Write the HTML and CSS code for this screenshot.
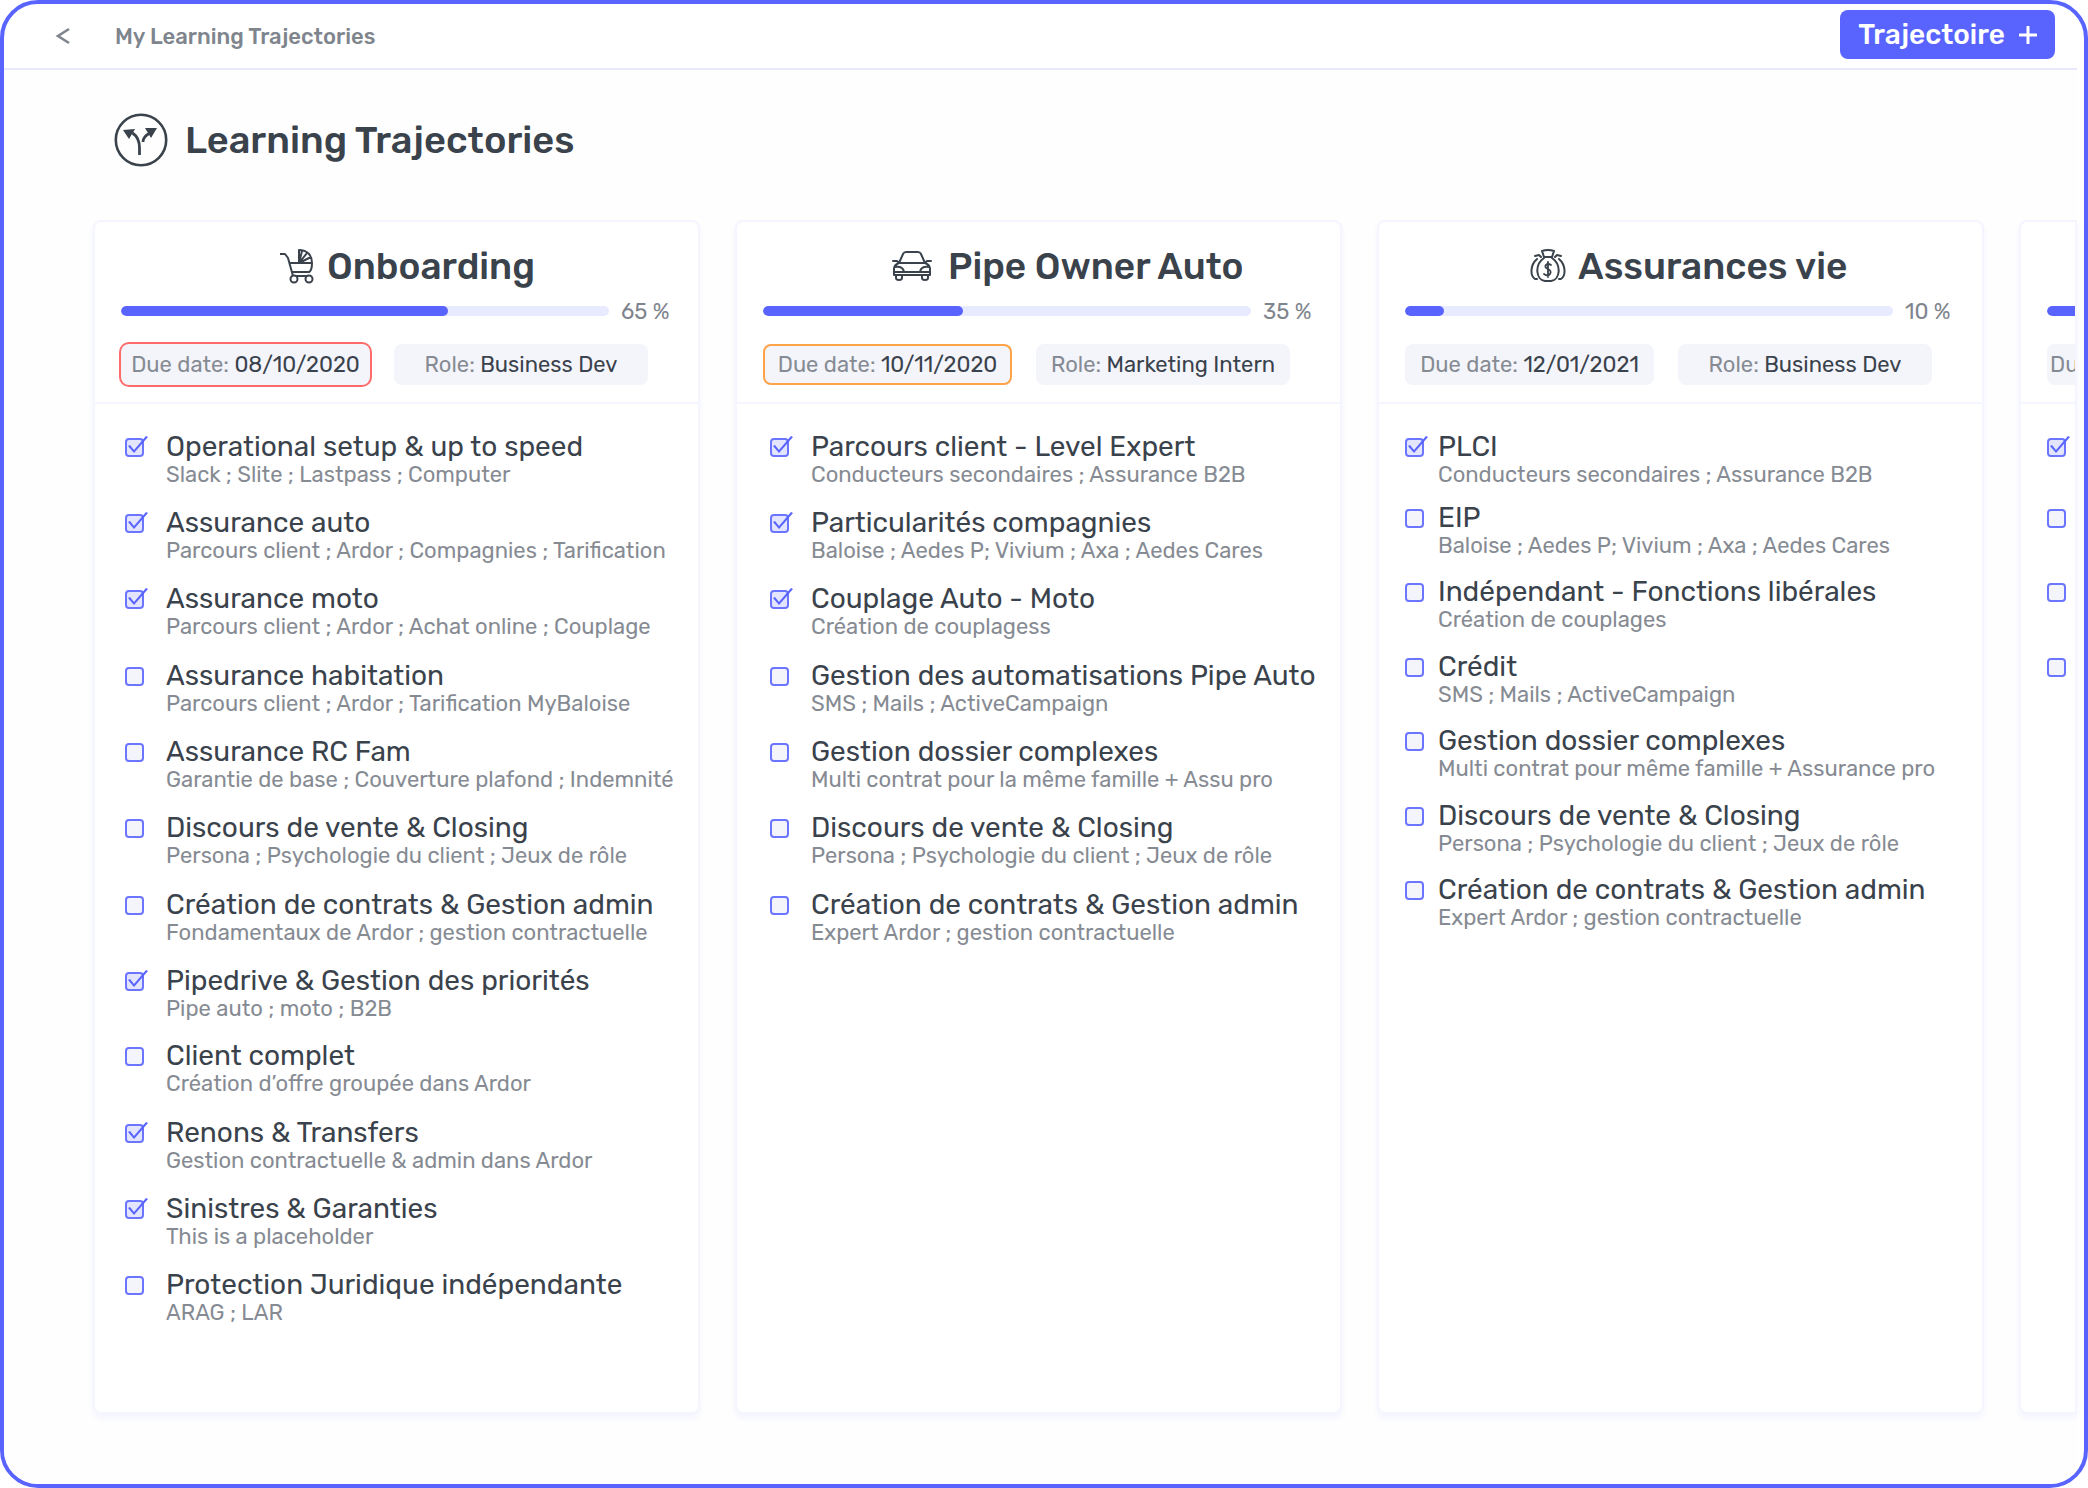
FILE: index.html
```html
<!DOCTYPE html>
<html lang="fr">
<head>
<meta charset="utf-8">
<meta name="viewport" content="width=device-width, initial-scale=1">
<title>Learning Trajectories</title>
<link rel="stylesheet" href="styles.css">
</head>
<body>
<div class="frame">
  <header class="topbar">
    <a class="back" href="#" aria-label="Back"><svg width="16" height="18" viewBox="0 0 16 18"><path d="M14 2 3 9l11 7" fill="none" stroke="currentColor" stroke-width="2.6"/></svg></a>
    <nav class="crumb"><a href="#">My Learning Trajectories</a></nav>
    <button class="add" type="button">Trajectoire <svg width="18" height="18" viewBox="0 0 18 18" aria-hidden="true"><path d="M9 1v16M1 9h16" stroke="currentColor" stroke-width="3" stroke-linecap="round"/></svg></button>
  </header>
  <main class="page">
    <h1 class="page-title">
      <svg width="54" height="54" viewBox="0 0 54 54" aria-hidden="true"><circle cx="27" cy="27" r="25.2" fill="none" stroke="currentColor" stroke-width="2.6"/><path d="M25.500 42V35c0-8-2.500-12-7-15M29 29c0-4 3-7 7-9" fill="none" stroke="currentColor" stroke-width="2.800"/><path d="m9 17 12-1-6 10zM31 15l12 0-6 10z" fill="currentColor"/></svg>
      Learning Trajectories
    </h1>
    <div class="board">
      <section class="card card--onboarding">
        <div class="card-head">
          <h2><svg width="36" height="36" viewBox="0 0 36 36" aria-hidden="true" fill="none" stroke="currentColor" stroke-width="2" stroke-linejoin="round"><path d="M1 6h5l3 4 5 18h16M10 15h23c0 5-1 8-3 9H13M20 15V2c8 0 13 5 13 13M20 15l3-12M20 15l8-10M20 15l12-6"/><circle cx="15" cy="31" r="3.500" fill="#fff"/><circle cx="30" cy="31" r="3.500" fill="#fff"/></svg>Onboarding</h2>
          <div class="progress"><div class="track"><div class="fill" style="width:67%"></div></div><span>65 %</span></div>
          <div class="chips"><p class="chip due late">Due date: <b>08/10/2020</b></p><p class="chip role">Role: <b>Business Dev</b></p></div>
        </div>
        <ul class="steps">
          <li><label><input type="checkbox" checked><span><strong>Operational setup &amp; up to speed</strong><small>Slack ; Slite ; Lastpass ; Computer</small></span></label></li>
          <li><label><input type="checkbox" checked><span><strong>Assurance auto</strong><small>Parcours client ; Ardor ; Compagnies ; Tarification</small></span></label></li>
          <li><label><input type="checkbox" checked><span><strong>Assurance moto</strong><small>Parcours client ; Ardor ; Achat online ; Couplage</small></span></label></li>
          <li><label><input type="checkbox"><span><strong>Assurance habitation</strong><small>Parcours client ; Ardor ; Tarification MyBaloise</small></span></label></li>
          <li><label><input type="checkbox"><span><strong>Assurance RC Fam</strong><small>Garantie de base ; Couverture plafond ; Indemnité</small></span></label></li>
          <li><label><input type="checkbox"><span><strong>Discours de vente &amp; Closing</strong><small>Persona ; Psychologie du client ; Jeux de rôle</small></span></label></li>
          <li><label><input type="checkbox"><span><strong>Création de contrats &amp; Gestion admin</strong><small>Fondamentaux de Ardor ; gestion contractuelle</small></span></label></li>
          <li><label><input type="checkbox" checked><span><strong>Pipedrive &amp; Gestion des priorités</strong><small>Pipe auto ; moto ; B2B</small></span></label></li>
          <li><label><input type="checkbox"><span><strong>Client complet</strong><small>Création d’offre groupée dans Ardor</small></span></label></li>
          <li><label><input type="checkbox" checked><span><strong>Renons &amp; Transfers</strong><small>Gestion contractuelle &amp; admin dans Ardor</small></span></label></li>
          <li><label><input type="checkbox" checked><span><strong>Sinistres &amp; Garanties</strong><small>This is a placeholder</small></span></label></li>
          <li><label><input type="checkbox"><span><strong>Protection Juridique indépendante</strong><small>ARAG ; LAR</small></span></label></li>
        </ul>
      </section>
      <section class="card card--auto">
        <div class="card-head">
          <h2><svg width="40" height="30" viewBox="0 0 40 30" aria-hidden="true" fill="none" stroke="currentColor" stroke-width="2" stroke-linejoin="round" stroke-linecap="round"><path d="M7 12 11 3q1-2 3-2h12q2 0 3 2l4 9M7 12h26M1 10h4l2 2M39 10h-4l-2 2M7 12q-5 2-5 6v6h36v-6q0-4-5-6M3 16q8-1 9 5H3M37 16q-8-1-9 5h9M13 21h14M4 24v3q0 2 3 2t3-2v-3M30 24v3q0 2 3 2t3-2v-3"/></svg>Pipe Owner Auto</h2>
          <div class="progress"><div class="track"><div class="fill" style="width:41%"></div></div><span>35 %</span></div>
          <div class="chips"><p class="chip due soon">Due date: <b>10/11/2020</b></p><p class="chip role">Role: <b>Marketing Intern</b></p></div>
        </div>
        <ul class="steps">
          <li><label><input type="checkbox" checked><span><strong>Parcours client - Level Expert</strong><small>Conducteurs secondaires ; Assurance B2B</small></span></label></li>
          <li><label><input type="checkbox" checked><span><strong>Particularités compagnies</strong><small>Baloise ; Aedes P; Vivium ; Axa ; Aedes Cares</small></span></label></li>
          <li><label><input type="checkbox" checked><span><strong>Couplage Auto - Moto</strong><small>Création de couplagess</small></span></label></li>
          <li><label><input type="checkbox"><span><strong>Gestion des automatisations Pipe Auto</strong><small>SMS ; Mails ; ActiveCampaign</small></span></label></li>
          <li><label><input type="checkbox"><span><strong>Gestion dossier complexes</strong><small>Multi contrat pour la même famille + Assu pro</small></span></label></li>
          <li><label><input type="checkbox"><span><strong>Discours de vente &amp; Closing</strong><small>Persona ; Psychologie du client ; Jeux de rôle</small></span></label></li>
          <li><label><input type="checkbox"><span><strong>Création de contrats &amp; Gestion admin</strong><small>Expert Ardor ; gestion contractuelle</small></span></label></li>
        </ul>
      </section>
      <section class="card card--vie">
        <div class="card-head">
          <h2><svg width="36" height="34" viewBox="0 0 36 34" aria-hidden="true" fill="none" stroke="currentColor" stroke-width="2" stroke-linejoin="round" stroke-linecap="round"><path d="M14 8 12 2q6-2 12 0l-2 6zM14 9C4 16 6 31 15 32h6c9-1 11-16 1-23M5 7l4-1 2 2M7 10C0 16 0 27 5 30h2M31 7l-4-1-2 2M29 10c7 6 7 17 2 20h-2"/><path d="M21 16q-3-2-5 0t2 4 2 5-6 0M18 13v15" stroke-width="1.800"/></svg>Assurances vie</h2>
          <div class="progress"><div class="track"><div class="fill" style="width:8%"></div></div><span>10 %</span></div>
          <div class="chips"><p class="chip due">Due date: <b>12/01/2021</b></p><p class="chip role">Role: <b>Business Dev</b></p></div>
        </div>
        <ul class="steps">
          <li><label><input type="checkbox" checked><span><strong>PLCI</strong><small>Conducteurs secondaires ; Assurance B2B</small></span></label></li>
          <li><label><input type="checkbox"><span><strong>EIP</strong><small>Baloise ; Aedes P; Vivium ; Axa ; Aedes Cares</small></span></label></li>
          <li><label><input type="checkbox"><span><strong>Indépendant - Fonctions libérales</strong><small>Création de couplages</small></span></label></li>
          <li><label><input type="checkbox"><span><strong>Crédit</strong><small>SMS ; Mails ; ActiveCampaign</small></span></label></li>
          <li><label><input type="checkbox"><span><strong>Gestion dossier complexes</strong><small>Multi contrat pour même famille + Assurance pro</small></span></label></li>
          <li><label><input type="checkbox"><span><strong>Discours de vente &amp; Closing</strong><small>Persona ; Psychologie du client ; Jeux de rôle</small></span></label></li>
          <li><label><input type="checkbox"><span><strong>Création de contrats &amp; Gestion admin</strong><small>Expert Ardor ; gestion contractuelle</small></span></label></li>
        </ul>
      </section>
      <section class="card card--vie card--next">
        <div class="card-head">
          <h2></h2>
          <div class="progress"><div class="track"><div class="fill" style="width:30%"></div></div></div>
          <div class="chips"><p class="chip due">Du</p></div>
        </div>
        <ul class="steps">
          <li><label><input type="checkbox" aria-label="1" checked><span></span></label></li>
          <li><label><input type="checkbox" aria-label="2"><span></span></label></li>
          <li><label><input type="checkbox" aria-label="3"><span></span></label></li>
          <li><label><input type="checkbox" aria-label="4"><span></span></label></li>
        </ul>
      </section>
    </div>
  </main>
</div>
</body>
</html>
```
FILE: styles.css
```css
* { box-sizing: border-box; }

body {
  margin: 0;
  background: #fff;
  color: #3a424c;
  font-family: Rubik, Roboto, "Liberation Sans", sans-serif;
  font-size: 22px;
}

h1, h2, p, ul { margin: 0; padding: 0; }
a { color: inherit; text-decoration: none; }

.frame {
  display: flex;
  flex-direction: column;
  min-height: 100vh;
  padding-right: 7px;
  border: 4px solid #5964ff;
  border-radius: 38px;
  overflow: hidden;
}

.topbar {
  display: flex;
  align-items: center;
  height: 66px;
  padding: 0 22px 0 51px;
  border-bottom: 2px solid #e8e9ff;
  color: #7f858d;
}
.back { display: flex; width: 60px; }
.crumb { flex: 1; font-weight: 500; }
.add {
  display: flex;
  align-items: center;
  justify-content: center;
  gap: 14px;
  width: 215px;
  height: 49px;
  margin-bottom: 3px;
  border: 0;
  border-radius: 8px;
  background: #5964ff;
  color: #fff;
  font: 500 28px/32px Rubik, Roboto, "Liberation Sans", sans-serif;
}

.page {
  display: flex;
  flex: 1;
  flex-direction: column;
  padding: 42px 0 70px 89px;
  background: #fefefe;
}
.page-title {
  display: flex;
  align-items: center;
  gap: 17px;
  height: 56px;
  padding-left: 21px;
  font-size: 38px;
  font-weight: 500;
}

.board { display: flex; flex: 1; gap: 35px; margin-top: 52px; }
.card {
  flex: 0 0 607px;
  min-width: 0;
  border: 2px solid #f5f5ff;
  border-radius: 8px;
  background: #fff;
  box-shadow: 0 4px 6px #f3f4ff;
}
.card--onboarding { --title-start: 184px; --title-gap: 12px; --box-start: 30px; --box-gap: 22px; }
.card--auto { --title-start: 155px; --title-gap: 16px; --box-start: 33px; --box-gap: 22px; }
.card--vie { --title-start: 151px; --title-gap: 12px; --box-start: 26px; --box-gap: 14px; }
.card--next { flex: 1 1 0; border-radius: 8px 0 0 8px; overflow: hidden; }

.card-head { height: 182px; padding: 22px 26px 0; border-bottom: 2px solid #f5f5ff; }
.card-head h2 {
  display: flex;
  align-items: center;
  gap: var(--title-gap);
  height: 44px;
  margin-left: -26px;
  padding-left: var(--title-start);
  font-size: 37px;
  font-weight: 500;
  white-space: nowrap;
}
.progress { display: flex; align-items: center; gap: 12px; height: 26px; margin-top: 10px; color: #7f858d; white-space: nowrap; }
.track { flex: 0 0 488px; height: 10px; border-radius: 5px; background: #e8eaff; overflow: hidden; }
.fill { height: 10px; border-radius: 5px; background: #5964ff; }

.chips { display: flex; gap: 24px; margin-top: 20px; }
.chip {
  flex: none;
  height: 41px;
  border-radius: 8px;
  background: #f4f5fb;
  color: #868b93;
  line-height: 41px;
  text-align: center;
  white-space: nowrap;
}
.chip b { color: #3a424c; font-weight: 400; }
.due { width: 249px; }
.role { width: 254px; }
.late { box-shadow: 0 0 0 2px #ff6b6b; }
.soon { box-shadow: inset 0 0 0 2px #ffa348; }
.card--next .due { padding-left: 3px; text-align: left; }

.steps { padding: 28px 0 60px var(--box-start); list-style: none; }
.steps li { height: 76px; }
.steps li:nth-child(3n) { height: 77px; }
.steps li:nth-child(8) { height: 75px; }
.card--vie .steps li { height: 74px; }
.card--vie .steps li:first-child { height: 71px; }
.card--vie .steps li:nth-child(3), .card--vie .steps li:nth-child(5) { height: 75px; }
.steps label { display: flex; gap: var(--box-gap); white-space: nowrap; }
.steps strong, .steps small { display: block; }
.steps strong { font-size: 28px; font-weight: 400; line-height: 30px; }
.steps small { color: #868b93; font-size: 22px; line-height: 26px; }

input[type="checkbox"] {
  appearance: none;
  flex: none;
  position: relative;
  width: 19px;
  height: 19px;
  margin: 6px 0 0;
  border: 2px solid #6b75ff;
  border-radius: 4px;
  background: #f4f5fb;
}
input:checked { background: #e3e5ff; }
input:checked::after {
  content: "";
  position: absolute;
  top: -4px;
  left: -2px;
  width: 23px;
  height: 20px;
  background: #5964ff;
  clip-path: polygon(3px 10px, 5px 9px, 9px 14px, 21px 0, 23px 1px, 9px 17px);
}
```
